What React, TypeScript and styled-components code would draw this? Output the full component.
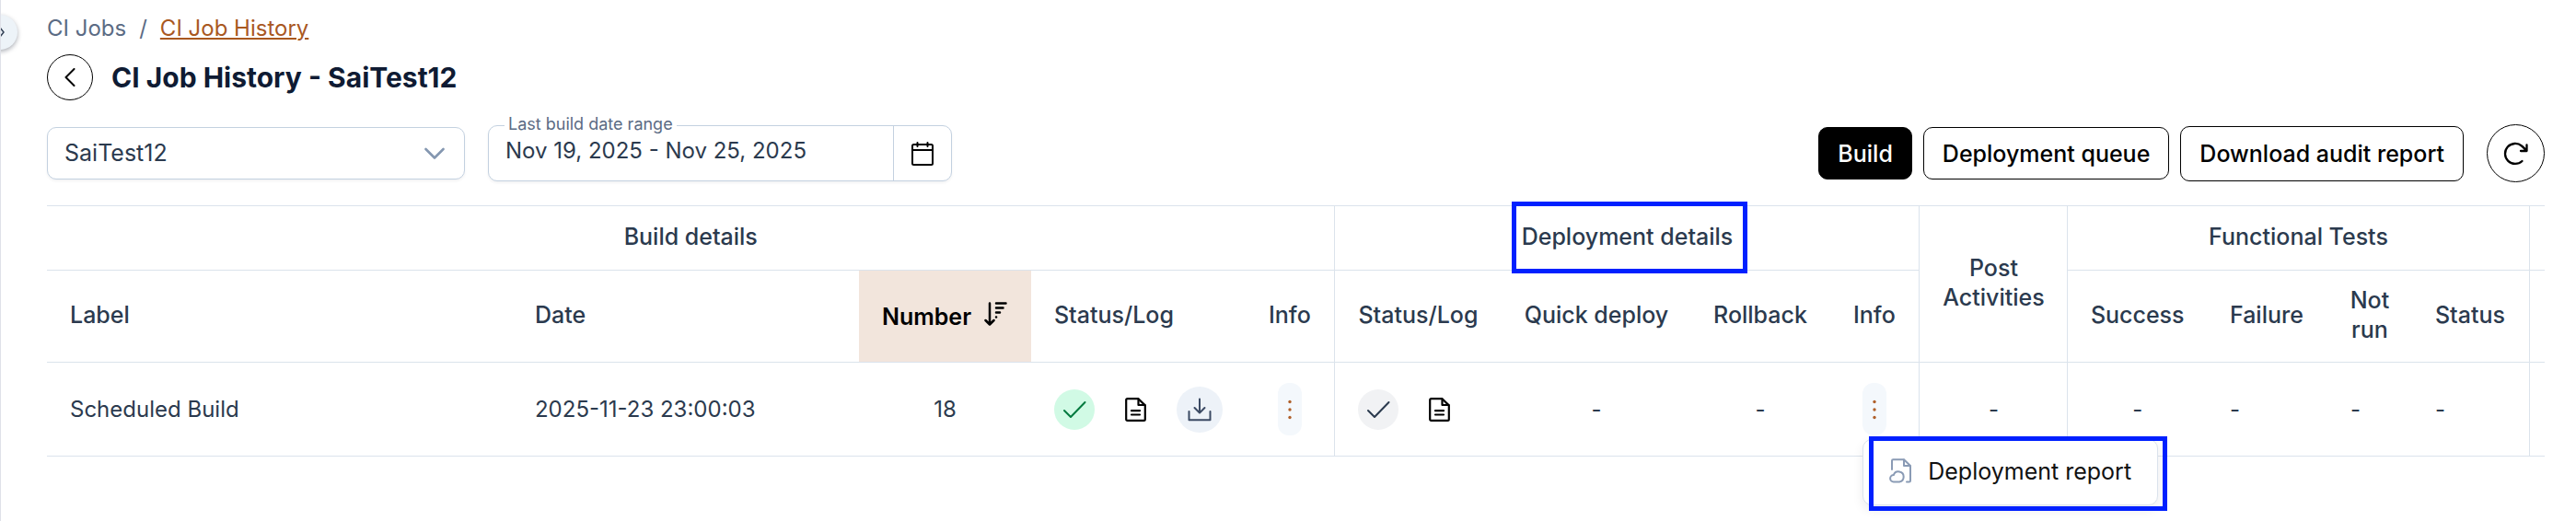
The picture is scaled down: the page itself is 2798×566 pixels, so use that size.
import React from "react";
import styled, { createGlobalStyle } from "styled-components";

const line = "#dbe3ec";
const ink = "#2b3a4e";
const sans = `Inter, "Liberation Sans", sans-serif`;

const GlobalStyle = createGlobalStyle`
  * { box-sizing: border-box; }
  body { margin: 0; background: #ffffff; font-family: ${sans}; font-size: 25px; line-height: 32px; color: ${ink}; }
  button, input, select { font: inherit; color: inherit; margin: 0; }
`;

const Page = styled.div`
  position: relative;
  min-height: 100vh;
  border-left: 1px solid #dfe1e8;
  padding: 15px 34px 16px 50px;
  overflow-x: clip;
`;

const SidebarToggle = styled.button`
  position: absolute;
  left: -20px;
  top: 16px;
  width: 38px;
  height: 38px;
  padding: 0;
  border: 0;
  border-radius: 50%;
  background: #edf3f8;
  box-shadow: 0 2px 5px rgba(15, 23, 42, 0.35);
  display: flex;
  align-items: center;
  justify-content: center;
`;

const Breadcrumb = styled.nav`
  display: flex;
  align-items: center;
  gap: 14px;
  height: 32px;
  font-size: 24px;
  color: #5b6b84;
`;

const Crumb = styled.a<{ $current?: boolean }>`
  color: ${(p) => (p.$current ? "#a9581f" : "#5b6b84")};
  text-decoration: ${(p) => (p.$current ? "underline" : "none")};
  text-decoration-thickness: 2px;
  text-underline-offset: 2px;
`;

const TitleRow = styled.header`
  display: flex;
  align-items: center;
  gap: 20px;
  margin-top: 12px;
`;

const Title = styled.h1`
  margin: 0;
  font-size: 30px;
  line-height: 36px;
  font-weight: 700;
  color: #0f1b33;
`;

const RoundButton = styled.button<{ $size: number }>`
  width: ${(p) => p.$size}px;
  height: ${(p) => p.$size}px;
  flex: none;
  padding: 0;
  border: 1px solid #000;
  border-radius: 50%;
  background: #fff;
  display: flex;
  align-items: center;
  justify-content: center;
`;

const Toolbar = styled.div`
  display: flex;
  align-items: center;
  justify-content: space-between;
  margin-top: 26px;
`;

const Filters = styled.div`
  display: flex;
  align-items: center;
  gap: 25px;
`;

const SelectBox = styled.div`
  display: grid;
  align-items: center;
  width: 454px;
  height: 57px;
  > * { grid-area: 1 / 1; }
  > svg { justify-self: end; margin-right: 22px; pointer-events: none; }
`;

const Select = styled.select`
  appearance: none;
  width: 100%;
  height: 100%;
  padding: 0 56px 2px 18px;
  border: 1px solid #c3d1e0;
  border-radius: 10px;
  background: #fff;
  box-shadow: 0 2px 3px rgba(15, 23, 42, 0.05);
`;

const DateField = styled.div`
  position: relative;
  display: flex;
  width: 504px;
  height: 61px;
  border: 1px solid #c3d1e0;
  border-radius: 10px;
  background: #fff;
  box-shadow: 0 2px 3px rgba(15, 23, 42, 0.05);
`;

const DateLabel = styled.label`
  position: absolute;
  left: 17px;
  top: -14px;
  padding: 0 4px;
  background: #fff;
  font-size: 18px;
  line-height: 24px;
  color: #5b6b84;
`;

const DateInput = styled.input`
  flex: 1;
  min-width: 0;
  padding: 0 18px 5px;
  border: 0;
  border-radius: 10px;
  background: transparent;
  font-size: 24px;
`;

const DateButton = styled.button`
  width: 63px;
  padding: 0;
  border: 0;
  border-left: 1px solid #c3d1e0;
  background: transparent;
  display: flex;
  align-items: center;
  justify-content: center;
`;

const Actions = styled.div`
  display: flex;
  align-items: center;
  gap: 12px;
  > :last-child { margin-left: 13px; }
`;

const ActionButton = styled.button<{ $primary?: boolean; $tall?: boolean }>`
  height: ${(p) => (p.$tall ? 60 : 57)}px;
  padding: 0 20px;
  border: 1px solid #000;
  border-radius: 10px;
  background: ${(p) => (p.$primary ? "#000" : "#fff")};
  color: ${(p) => (p.$primary ? "#fff" : "#000")};
  font-weight: 500;
  white-space: nowrap;
`;

const Table = styled.table`
  width: 100%;
  margin-top: 25px;
  table-layout: fixed;
  border-collapse: collapse;
  border-top: 1px solid ${line};
  th, td { border-bottom: 1px solid ${line}; }
`;

const Group = styled.th`
  height: 70px;
  padding: 0 0 3px;
  border-right: 1px solid ${line};
  font-weight: 500;
`;

const Head = styled.th<{ $align?: string; $end?: boolean; $sorted?: boolean }>`
  height: 100px;
  padding: 0 0 ${(p) => (p.$sorted ? 0 : 3)}px ${(p) => (p.$align === "center" ? 0 : 25)}px;
  text-align: ${(p) => p.$align || "left"};
  border-right: ${(p) => (p.$end ? `1px solid ${line}` : "0")};
  background: ${(p) => (p.$sorted ? "#f2e5dc" : "transparent")};
  color: ${(p) => (p.$sorted ? "#000" : ink)};
  font-weight: ${(p) => (p.$sorted ? 600 : 500)};
`;

const Cell = styled.td<{ $align?: string; $end?: boolean }>`
  height: 102px;
  padding: 0 0 0 ${(p) => (p.$align === "center" ? 0 : 25)}px;
  text-align: ${(p) => p.$align || "left"};
  border-right: ${(p) => (p.$end ? `1px solid ${line}` : "0")};
  font-size: 24px;
`;

const SortButton = styled.button`
  display: flex;
  align-items: center;
  gap: 14px;
  padding: 0;
  border: 0;
  background: transparent;
  > svg { margin-bottom: 6px; }
`;

const Icons = styled.div`
  display: flex;
  align-items: center;
  gap: 33px;
`;

const Status = styled.span<{ $ok?: boolean }>`
  display: flex;
  align-items: center;
  justify-content: center;
  width: 44px;
  height: 44px;
  border-radius: 50%;
  background: ${(p) => (p.$ok ? "#d1fae5" : "#f1f2f4")};
  color: ${(p) => (p.$ok ? "#047a3f" : ink)};
`;

const IconButton = styled.button<{ $filled?: boolean }>`
  display: flex;
  align-items: center;
  justify-content: center;
  width: ${(p) => (p.$filled ? 50 : 23)}px;
  height: 50px;
  padding: 0;
  border: 0;
  border-radius: ${(p) => (p.$filled ? "50%" : "0")};
  background: ${(p) => (p.$filled ? "#edf2f8" : "transparent")};
  color: ${(p) => (p.$filled ? "#3b4a63" : "#000")};
`;

const MenuAnchor = styled.div`
  position: relative;
  width: 26px;
  margin: 0 auto;
`;

const More = styled.button`
  display: flex;
  align-items: center;
  justify-content: center;
  width: 26px;
  height: 57px;
  padding: 0;
  border: 0;
  border-radius: 12px;
  background: #f4f8fc;
`;

const Menu = styled.div`
  position: absolute;
  z-index: 1;
  left: 0;
  top: 61px;
  width: 321px;
  border: 1px solid ${line};
  border-radius: 10px;
  background: #fff;
  box-shadow: 0 5px 12px rgba(15, 23, 42, 0.08);
`;

const MenuItem = styled.button`
  display: flex;
  align-items: center;
  gap: 18px;
  width: 100%;
  height: 70px;
  padding: 0 0 3px 28px;
  border: 0;
  background: transparent;
  color: #111;
  font-size: 25px;
  white-space: nowrap;
`;

const Callout = styled.span`
  position: absolute;
  z-index: 2;
  border: 5px solid #0020ff;
  pointer-events: none;
`;

const GroupCallout = styled(Callout)`
  inset: -22px -16px -24px -11px;
`;

const MenuCallout = styled(Callout)`
  inset: -4px -11px -7px 6px;
`;

const GroupLabel = styled.span`
  position: relative;
  display: inline-block;
`;

const Check = () => (
  <svg width="26" height="20" viewBox="0 0 26 20" fill="none" stroke="currentColor" strokeWidth="2" strokeLinecap="round" strokeLinejoin="round">
    <path d="M2 11L9 18L24.500 2" />
  </svg>
);

const DocIcon = () => (
  <svg width="23" height="26" viewBox="0 0 23 26" fill="none" stroke="currentColor" strokeWidth="2.200" strokeLinejoin="round" strokeLinecap="round">
    <path d="M2.600 1.200H14.500L21.800 8.400V23.400Q21.800 24.800 20.400 24.800H2.600Q1.200 24.800 1.200 23.400V2.600Q1.200 1.200 2.600 1.200Z" />
    <path d="M14.500 1.500V8H21.500M7 14.200H16M7 18.500H16" />
  </svg>
);

const DownloadIcon = () => (
  <svg width="26" height="26" viewBox="0 0 26 26" fill="none" stroke="currentColor" strokeWidth="2" strokeLinejoin="round" strokeLinecap="round">
    <path d="M13 1.500V16M7.500 11L13 16.500L18.500 11M1.500 15V24.300H24.500V15" />
  </svg>
);

const Dots = () => (
  <svg width="4" height="22" viewBox="0 0 4 22" fill="#b0602a">
    <circle cx="2" cy="2.500" r="1.700" />
    <circle cx="2" cy="11" r="1.700" />
    <circle cx="2" cy="19.500" r="1.700" />
  </svg>
);

const CloudFile = () => (
  <svg width="24" height="27" viewBox="0 0 24 27" fill="none" stroke="#8a9bb5" strokeWidth="2" strokeLinejoin="round" strokeLinecap="round">
    <path d="M3 12V2.500Q3 1.200 4.300 1.200H16L23 8V24.200Q23 25.500 21.700 25.500H19" />
    <path d="M16 1.500V8H22.500" />
    <path d="M4.800 25.500A3.700 3.700 0 0 1 4.800 18.100A5.600 5.600 0 1 1 11 25.500Z" />
  </svg>
);

const App = () => (
  <>
    <GlobalStyle />
    <Page>
      <SidebarToggle aria-label="Expand sidebar">
        <svg width="10" height="12" viewBox="0 0 10 12" fill="none" stroke="#334155" strokeWidth="1.500">
          <path d="M5 1L9 6L5 11" />
        </svg>
      </SidebarToggle>
      <Breadcrumb aria-label="Breadcrumb">
        <Crumb href="#jobs">CI Jobs</Crumb>
        <span>/</span>
        <Crumb href="#history" $current>CI Job History</Crumb>
      </Breadcrumb>
      <TitleRow>
        <RoundButton $size={50} aria-label="Back">
          <svg width="12" height="20" viewBox="0 0 12 20" fill="none" stroke="#000" strokeWidth="2" strokeLinecap="round" strokeLinejoin="round">
            <path d="M10.500 1L1.500 10L10.500 19" />
          </svg>
        </RoundButton>
        <Title>CI Job History - SaiTest12</Title>
      </TitleRow>
      <Toolbar>
        <Filters>
          <SelectBox>
            <Select aria-label="Job" defaultValue="SaiTest12">
              <option>SaiTest12</option>
            </Select>
            <svg width="22" height="14" viewBox="0 0 22 14" fill="none" stroke="#8497b0" strokeWidth="2.600" strokeLinecap="round" strokeLinejoin="round">
              <path d="M1.500 2L11 11.500L20.500 2" />
            </svg>
          </SelectBox>
          <DateField>
            <DateLabel htmlFor="range">Last build date range</DateLabel>
            <DateInput id="range" type="text" defaultValue="Nov 19, 2025 - Nov 25, 2025" />
            <DateButton aria-label="Open calendar">
              <svg width="24" height="26" viewBox="0 0 24 26" fill="none" stroke="#000" strokeWidth="2" strokeLinejoin="round" strokeLinecap="round">
                <rect x="1" y="3" width="22" height="22" rx="1.500" />
                <path d="M1 9H23M6.500 1V5M17.500 1V5" />
              </svg>
            </DateButton>
          </DateField>
        </Filters>
        <Actions>
          <ActionButton $primary>Build</ActionButton>
          <ActionButton>Deployment queue</ActionButton>
          <ActionButton $tall>Download audit report</ActionButton>
          <RoundButton $size={63} aria-label="Refresh">
            <svg width="27" height="26" viewBox="0 0 27 26" fill="none" stroke="#000" strokeWidth="2.300" strokeLinecap="round" strokeLinejoin="round">
              <path d="M20.500 21A11 11 0 1 1 20 4.500Q22 6 25 9.500M25.500 3.500V10H19" />
            </svg>
          </RoundButton>
        </Actions>
      </Toolbar>
      <Table>
        <colgroup>
          <col />
          {[377, 187, 233, 97, 182, 204, 152, 97, 161, 151, 131, 92, 127, 17].map((w, i) => (
            <col key={i} width={w} />
          ))}
        </colgroup>
        <thead>
          <tr>
            <Group colSpan={5} scope="colgroup">Build details</Group>
            <Group colSpan={4} scope="colgroup">
              <GroupLabel>
                Deployment details
                <GroupCallout />
              </GroupLabel>
            </Group>
            <Group rowSpan={2} scope="col">Post<br />Activities</Group>
            <Group colSpan={4} scope="colgroup">Functional Tests</Group>
            <td />
          </tr>
          <tr>
            <Head scope="col">Label</Head>
            <Head scope="col">Date</Head>
            <Head scope="col" $sorted aria-sort="descending">
              <SortButton>
                Number
                <svg width="25" height="26" viewBox="0 0 25 26" fill="none" stroke="#000" strokeWidth="2.500" strokeLinecap="round" strokeLinejoin="round">
                  <path d="M6 1.500V24M1.500 20L6 24.500L10.500 20M13 1.500H23.500M13 6.500H20.500M13 11.500H17M13 16.500H13.100" />
                </svg>
              </SortButton>
            </Head>
            <Head scope="col">Status/Log</Head>
            <Head scope="col" $end>Info</Head>
            <Head scope="col">Status/Log</Head>
            <Head scope="col" $align="center">Quick deploy</Head>
            <Head scope="col" $align="center">Rollback</Head>
            <Head scope="col" $end>Info</Head>
            <Head scope="col" $align="center">Success</Head>
            <Head scope="col">Failure</Head>
            <Head scope="col" $align="center">Not<br />run</Head>
            <Head scope="col" $end>Status</Head>
            <td />
          </tr>
        </thead>
        <tbody>
          <tr>
            <Cell>Scheduled Build</Cell>
            <Cell>2025-11-23 23:00:03</Cell>
            <Cell $align="center">18</Cell>
            <Cell>
              <Icons>
                <Status $ok role="img" aria-label="Succeeded"><Check /></Status>
                <IconButton aria-label="View log"><DocIcon /></IconButton>
                <IconButton $filled aria-label="Download"><DownloadIcon /></IconButton>
              </Icons>
            </Cell>
            <Cell $align="center" $end>
              <MenuAnchor>
                <More aria-label="Build info"><Dots /></More>
              </MenuAnchor>
            </Cell>
            <Cell>
              <Icons>
                <Status role="img" aria-label="Completed"><Check /></Status>
                <IconButton aria-label="View log"><DocIcon /></IconButton>
              </Icons>
            </Cell>
            <Cell $align="center">-</Cell>
            <Cell $align="center">-</Cell>
            <Cell $align="center" $end>
              <MenuAnchor>
                <More aria-label="Deployment info" aria-expanded="true"><Dots /></More>
                <Menu>
                  <MenuItem><CloudFile />Deployment report</MenuItem>
                  <MenuCallout />
                </Menu>
              </MenuAnchor>
            </Cell>
            <Cell $align="center" $end>-</Cell>
            <Cell $align="center">-</Cell>
            <Cell>-</Cell>
            <Cell>-</Cell>
            <Cell $end>-</Cell>
            <td />
          </tr>
        </tbody>
      </Table>
    </Page>
  </>
);

export default App;
